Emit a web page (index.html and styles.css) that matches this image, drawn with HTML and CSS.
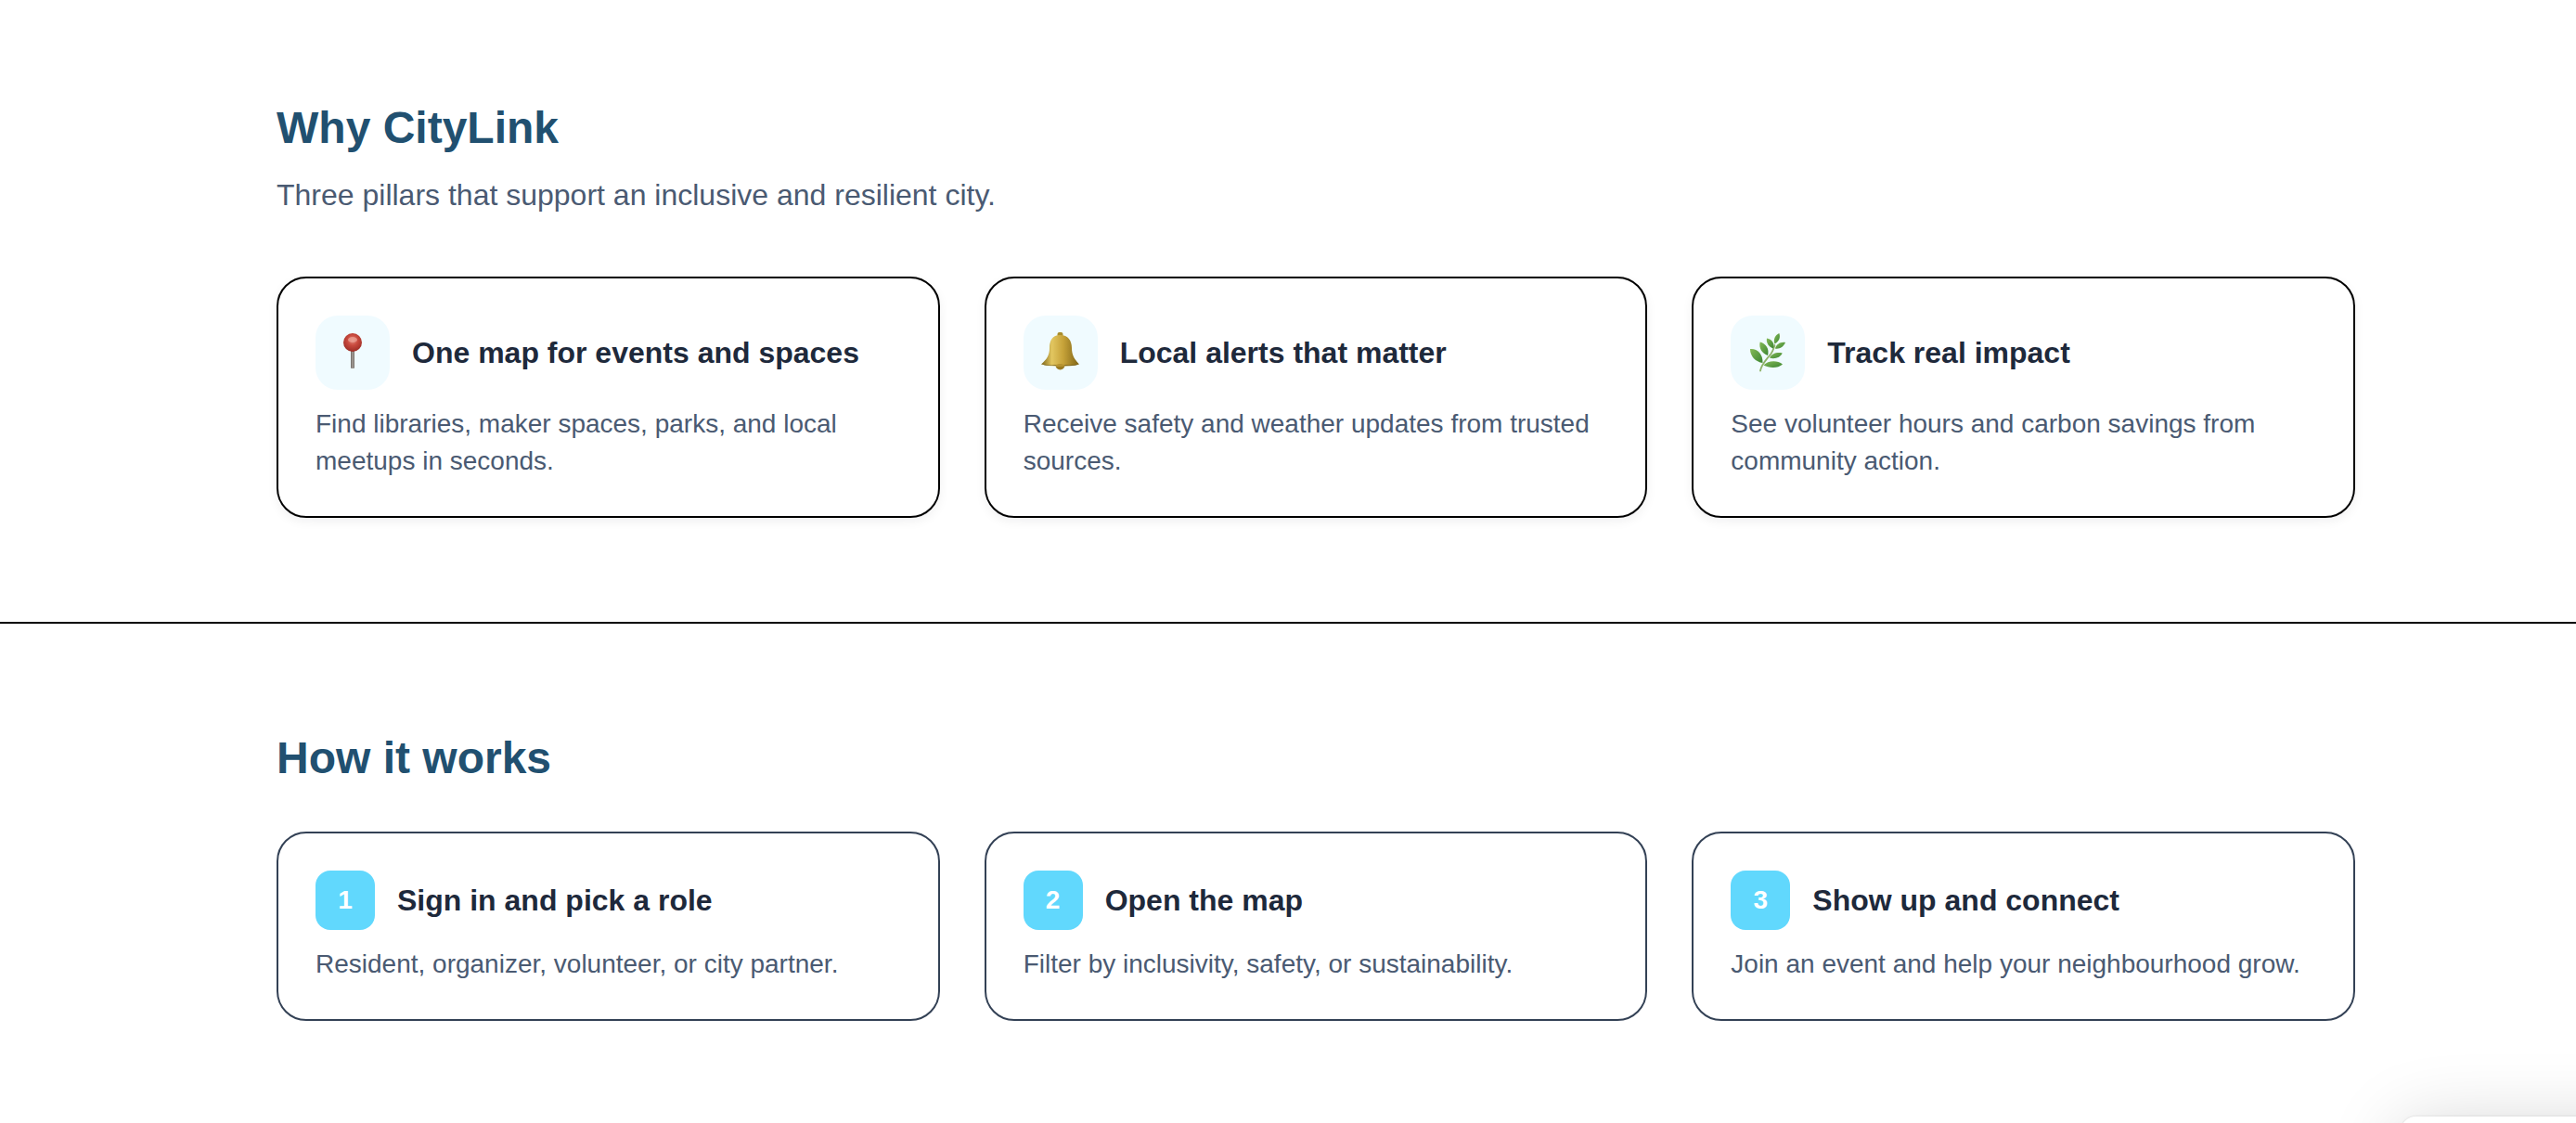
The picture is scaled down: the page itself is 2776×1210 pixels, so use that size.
FILE: index.html
```html
<!DOCTYPE html>
<html lang="en">
<head>
<meta charset="utf-8">
<title>CityLink</title>
<link rel="stylesheet" href="styles.css">
</head>
<body>
<svg class="defs" width="0" height="0" aria-hidden="true">
  <defs>
    <radialGradient id="pinHead" cx="50%" cy="38%" r="62%">
      <stop offset="0" stop-color="#e58d80"/>
      <stop offset=".45" stop-color="#c94a3e"/>
      <stop offset="1" stop-color="#9c2c25"/>
    </radialGradient>
    <linearGradient id="pinStem" x1="0" x2="1" y1="0" y2="0">
      <stop offset="0" stop-color="#6a6561"/>
      <stop offset=".5" stop-color="#a9a29c"/>
      <stop offset="1" stop-color="#716b66"/>
    </linearGradient>
    <linearGradient id="bellBody" x1="0" x2="1" y1="0" y2="0">
      <stop offset="0" stop-color="#7d6518"/>
      <stop offset=".28" stop-color="#e2c660"/>
      <stop offset=".58" stop-color="#c6a239"/>
      <stop offset="1" stop-color="#7f6416"/>
    </linearGradient>
    <linearGradient id="leaf" x1="0" x2="1" y1="0" y2="1">
      <stop offset="0" stop-color="#86ba58"/>
      <stop offset="1" stop-color="#3b8531"/>
    </linearGradient>
  </defs>
</svg>

<section class="section why">
  <div class="container">
    <h2 class="heading">Why CityLink</h2>
    <p class="lead">Three pillars that support an inclusive and resilient city.</p>
    <div class="grid grid-why">
      <article class="card card-pillar">
        <div class="card-head">
          <span class="icon-box">
            <svg class="emoji" viewBox="0 0 44 44">
              <rect x="20" y="18" width="4" height="21" rx="1" fill="url(#pinStem)"/>
              <circle cx="22" cy="11" r="10" fill="url(#pinHead)"/>
              <ellipse cx="22" cy="8" rx="5" ry="3" fill="#eea598" opacity=".7"/>
            </svg>
          </span>
          <h3 class="card-title">One map for events and spaces</h3>
        </div>
        <p class="card-text">Find libraries, maker spaces, parks, and local meetups in seconds.</p>
      </article>
      <article class="card card-pillar">
        <div class="card-head">
          <span class="icon-box">
            <svg class="emoji" viewBox="0 0 44 44">
              <rect x="18.500" y="0" width="6" height="5" rx="2" fill="#a98d2c"/>
              <circle cx="21.500" cy="35.500" r="5" fill="#9a7a20"/>
              <path d="M21.500 3C13 3 10 9 10 17C10 25 7 29 1 34.500C8 36.500 15 36.500 21.500 36.500C29 36.500 36 36.500 42 34.500C37 29 34 25 34 17C34 9 30 3 21.500 3Z" fill="url(#bellBody)"/>
              <path d="M1 34.500C8 36.500 36 36.500 42 34.500C36 35.500 8 35.500 1 34.500Z" fill="#6f5a17"/>
              <path d="M16.500 35.500C19 33.500 24 33.500 26.500 35.500C25 37 18 37 16.500 35.500Z" fill="#b5922f"/>
            </svg>
          </span>
          <h3 class="card-title">Local alerts that matter</h3>
        </div>
        <p class="card-text">Receive safety and weather updates from trusted sources.</p>
      </article>
      <article class="card card-pillar">
        <div class="card-head">
          <span class="icon-box">
            <svg class="emoji" viewBox="0 0 44 44">
              <path d="M14 41.500C15 35 20 30 24 25C27 22 28 19 29.500 14" fill="none" stroke="#8fb268" stroke-width="1.800" stroke-linecap="round"/>
              <path d="M3 18C10 17 17 23 16.500 33C9 32 3 26 3 18Z" fill="url(#leaf)"/>
              <path d="M13.700 10.500C20 12 24 18 22 25C16 23 12 17 13.700 10.500Z" fill="url(#leaf)"/>
              <path d="M21 6.500C26 7 30 12 28 17.500C23 16 20 11 21 6.500Z" fill="url(#leaf)"/>
              <path d="M34.300 1C36 6 34 10 29.500 12.500C27.500 8 30 3 34.300 1Z" fill="url(#leaf)"/>
              <path d="M41 11C39 16 34 18.500 30 17.500C31 13 36 10 41 11Z" fill="url(#leaf)"/>
              <path d="M37.700 22.500C36 27 29 29.500 24 27.500C26 23 32 21 37.700 22.500Z" fill="url(#leaf)"/>
              <path d="M38 34.500C33 39 24 39 17.500 35.500C22 30.500 32 29.500 38 34.500Z" fill="url(#leaf)"/>
            </svg>
          </span>
          <h3 class="card-title">Track real impact</h3>
        </div>
        <p class="card-text">See volunteer hours and carbon savings from community action.</p>
      </article>
    </div>
  </div>
</section>

<section class="section how">
  <div class="container">
    <h2 class="heading">How it works</h2>
    <div class="grid grid-how">
      <article class="card card-step">
        <div class="card-head">
          <span class="badge">1</span>
          <h3 class="card-title">Sign in and pick a role</h3>
        </div>
        <p class="card-text">Resident, organizer, volunteer, or city partner.</p>
      </article>
      <article class="card card-step">
        <div class="card-head">
          <span class="badge">2</span>
          <h3 class="card-title">Open the map</h3>
        </div>
        <p class="card-text">Filter by inclusivity, safety, or sustainability.</p>
      </article>
      <article class="card card-step">
        <div class="card-head">
          <span class="badge">3</span>
          <h3 class="card-title">Show up and connect</h3>
        </div>
        <p class="card-text">Join an event and help your neighbourhood grow.</p>
      </article>
    </div>
  </div>
</section>

<div class="floating-panel"></div>
</body>
</html>
```
FILE: styles.css
```css
* { box-sizing: border-box; }

html, body {
  margin: 0;
  background: #fff;
  font-family: "Liberation Sans", Arial, sans-serif;
  overflow: hidden;
  height: 1210px;
}

.defs { position: absolute; }

.container {
  width: 2240px;
  margin-left: 298px;
}

.section.why {
  padding: 112px 0 112px;
  border-bottom: 2px solid #000;
}

.section.how {
  padding: 119px 0 0;
}

.heading {
  margin: 0;
  font-size: 48px;
  line-height: 52px;
  font-weight: 700;
  color: #215070;
}

.lead {
  margin: 22px 0 0;
  font-size: 32px;
  line-height: 48px;
  color: #4a5a72;
}

.grid {
  display: grid;
  grid-template-columns: repeat(3, 1fr);
  gap: 48px;
}

.grid-why { margin-top: 64px; }
.grid-how { margin-top: 53px; }

.card {
  border-radius: 32px;
  background: #fff;
  padding: 40px;
}

.card-pillar {
  border: 2px solid #000;
  box-shadow: 0 4px 12px rgba(15, 23, 42, .06);
}

.card-step {
  border: 2px solid #334155;
}

.card-head {
  display: flex;
  align-items: center;
  gap: 24px;
}

.icon-box {
  flex: none;
  width: 80px;
  height: 80px;
  border-radius: 24px;
  background: #f0fbff;
  display: flex;
  align-items: center;
  justify-content: center;
}

.emoji {
  width: 44px;
  height: 44px;
  display: block;
}

.badge {
  flex: none;
  width: 64px;
  height: 64px;
  border-radius: 16px;
  background: #61d8fd;
  color: #fff;
  font-weight: 700;
  font-size: 28px;
  display: flex;
  align-items: center;
  justify-content: center;
}

.card-title {
  margin: 0;
  font-size: 32px;
  line-height: 40px;
  font-weight: 700;
  color: #1e293b;
}

.card-text {
  margin: 17px 0 -1px;
  font-size: 28px;
  line-height: 40px;
  color: #4a5a72;
}

.floating-panel {
  position: fixed;
  left: 2587px;
  top: 1203px;
  width: 400px;
  height: 300px;
  background: #fff;
  border-radius: 16px;
  box-shadow: 0 10px 80px rgba(0, 0, 0, .18), 0 0 3px rgba(0, 0, 0, .14);
}
```
